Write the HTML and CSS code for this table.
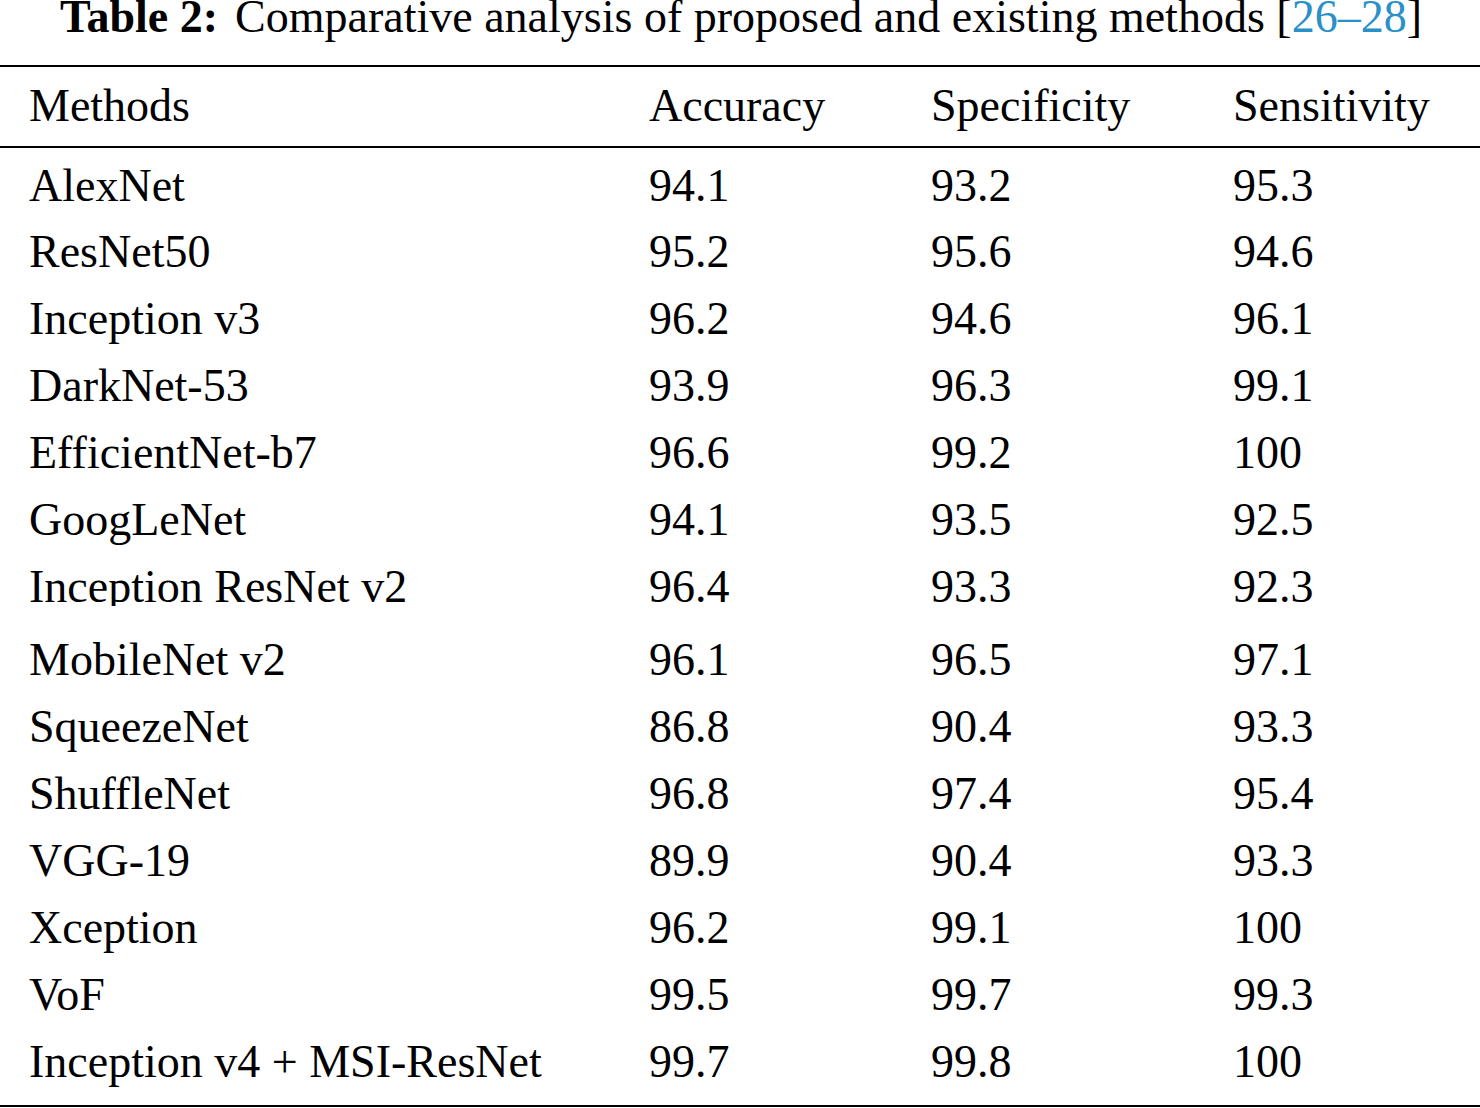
FILE: index.html
```html
<!DOCTYPE html>
<html>
<head>
<meta charset="utf-8">
<link rel="stylesheet" href="styles.css">
</head>
<body>
<div class="caption"><b class="label">Table 2:</b>Comparative analysis of proposed and existing methods [<span class="ref">26</span><span class="ref">–</span><span class="ref">28</span>]</div>
<div class="table">
  <div class="thead">
    <div class="row"><div>Methods</div><div>Accuracy</div><div>Specificity</div><div>Sensitivity</div></div>
  </div>
  <div class="tbody">
    <div class="row"><div>AlexNet</div><div>94.1</div><div>93.2</div><div>95.3</div></div>
    <div class="row"><div>ResNet50</div><div>95.2</div><div>95.6</div><div>94.6</div></div>
    <div class="row"><div>Inception v3</div><div>96.2</div><div>94.6</div><div>96.1</div></div>
    <div class="row"><div>DarkNet-53</div><div>93.9</div><div>96.3</div><div>99.1</div></div>
    <div class="row"><div>EfficientNet-b7</div><div>96.6</div><div>99.2</div><div>100</div></div>
    <div class="row"><div>GoogLeNet</div><div>94.1</div><div>93.5</div><div>92.5</div></div>
    <div class="row cut"><div>Inception ResNet v2</div><div>96.4</div><div>93.3</div><div>92.3</div></div>
    <div class="row"><div>MobileNet v2</div><div>96.1</div><div>96.5</div><div>97.1</div></div>
    <div class="row"><div>SqueezeNet</div><div>86.8</div><div>90.4</div><div>93.3</div></div>
    <div class="row"><div>ShuffleNet</div><div>96.8</div><div>97.4</div><div>95.4</div></div>
    <div class="row"><div>VGG-19</div><div>89.9</div><div>90.4</div><div>93.3</div></div>
    <div class="row"><div>Xception</div><div>96.2</div><div>99.1</div><div>100</div></div>
    <div class="row"><div>VoF</div><div>99.5</div><div>99.7</div><div>99.3</div></div>
    <div class="row"><div>Inception v4 + MSI-ResNet</div><div>99.7</div><div>99.8</div><div>100</div></div>
  </div>
</div>
</body>
</html>
```

FILE: styles.css
```css
html, body {
  margin: 0;
  padding: 0;
  background: #fff;
  overflow: hidden;
}
body {
  width: 1480px;
  height: 1108px;
  font-family: "Liberation Serif", "Times New Roman", serif;
  font-size: 46px;
  color: #000;
}
.caption {
  height: 34px;
  line-height: 34px;
  text-align: center;
  white-space: nowrap;
  margin-bottom: 31px;
  padding-left: 2px;
}
.label {
  font-weight: bold;
  margin-right: 17px;
}
.ref {
  color: #2a90c8;
}
.table {
  border-top: 2px solid #000;
  border-bottom: 2px solid #000;
  width: 1480px;
}
.thead {
  padding-top: 5.6px;
  padding-bottom: 6.4px;
  border-bottom: 2px solid #000;
}
.tbody {
  padding-top: 4.7px;
  padding-bottom: 9.1px;
}
.row {
  display: grid;
  grid-template-columns: 620px 282px 302px 1fr;
  padding-left: 29px;
  line-height: 66.9px;
  height: 66.9px;
  white-space: nowrap;
}
.row.cut {
  height: 51.9px;
  overflow: hidden;
  margin-bottom: 21.6px;
}
```
